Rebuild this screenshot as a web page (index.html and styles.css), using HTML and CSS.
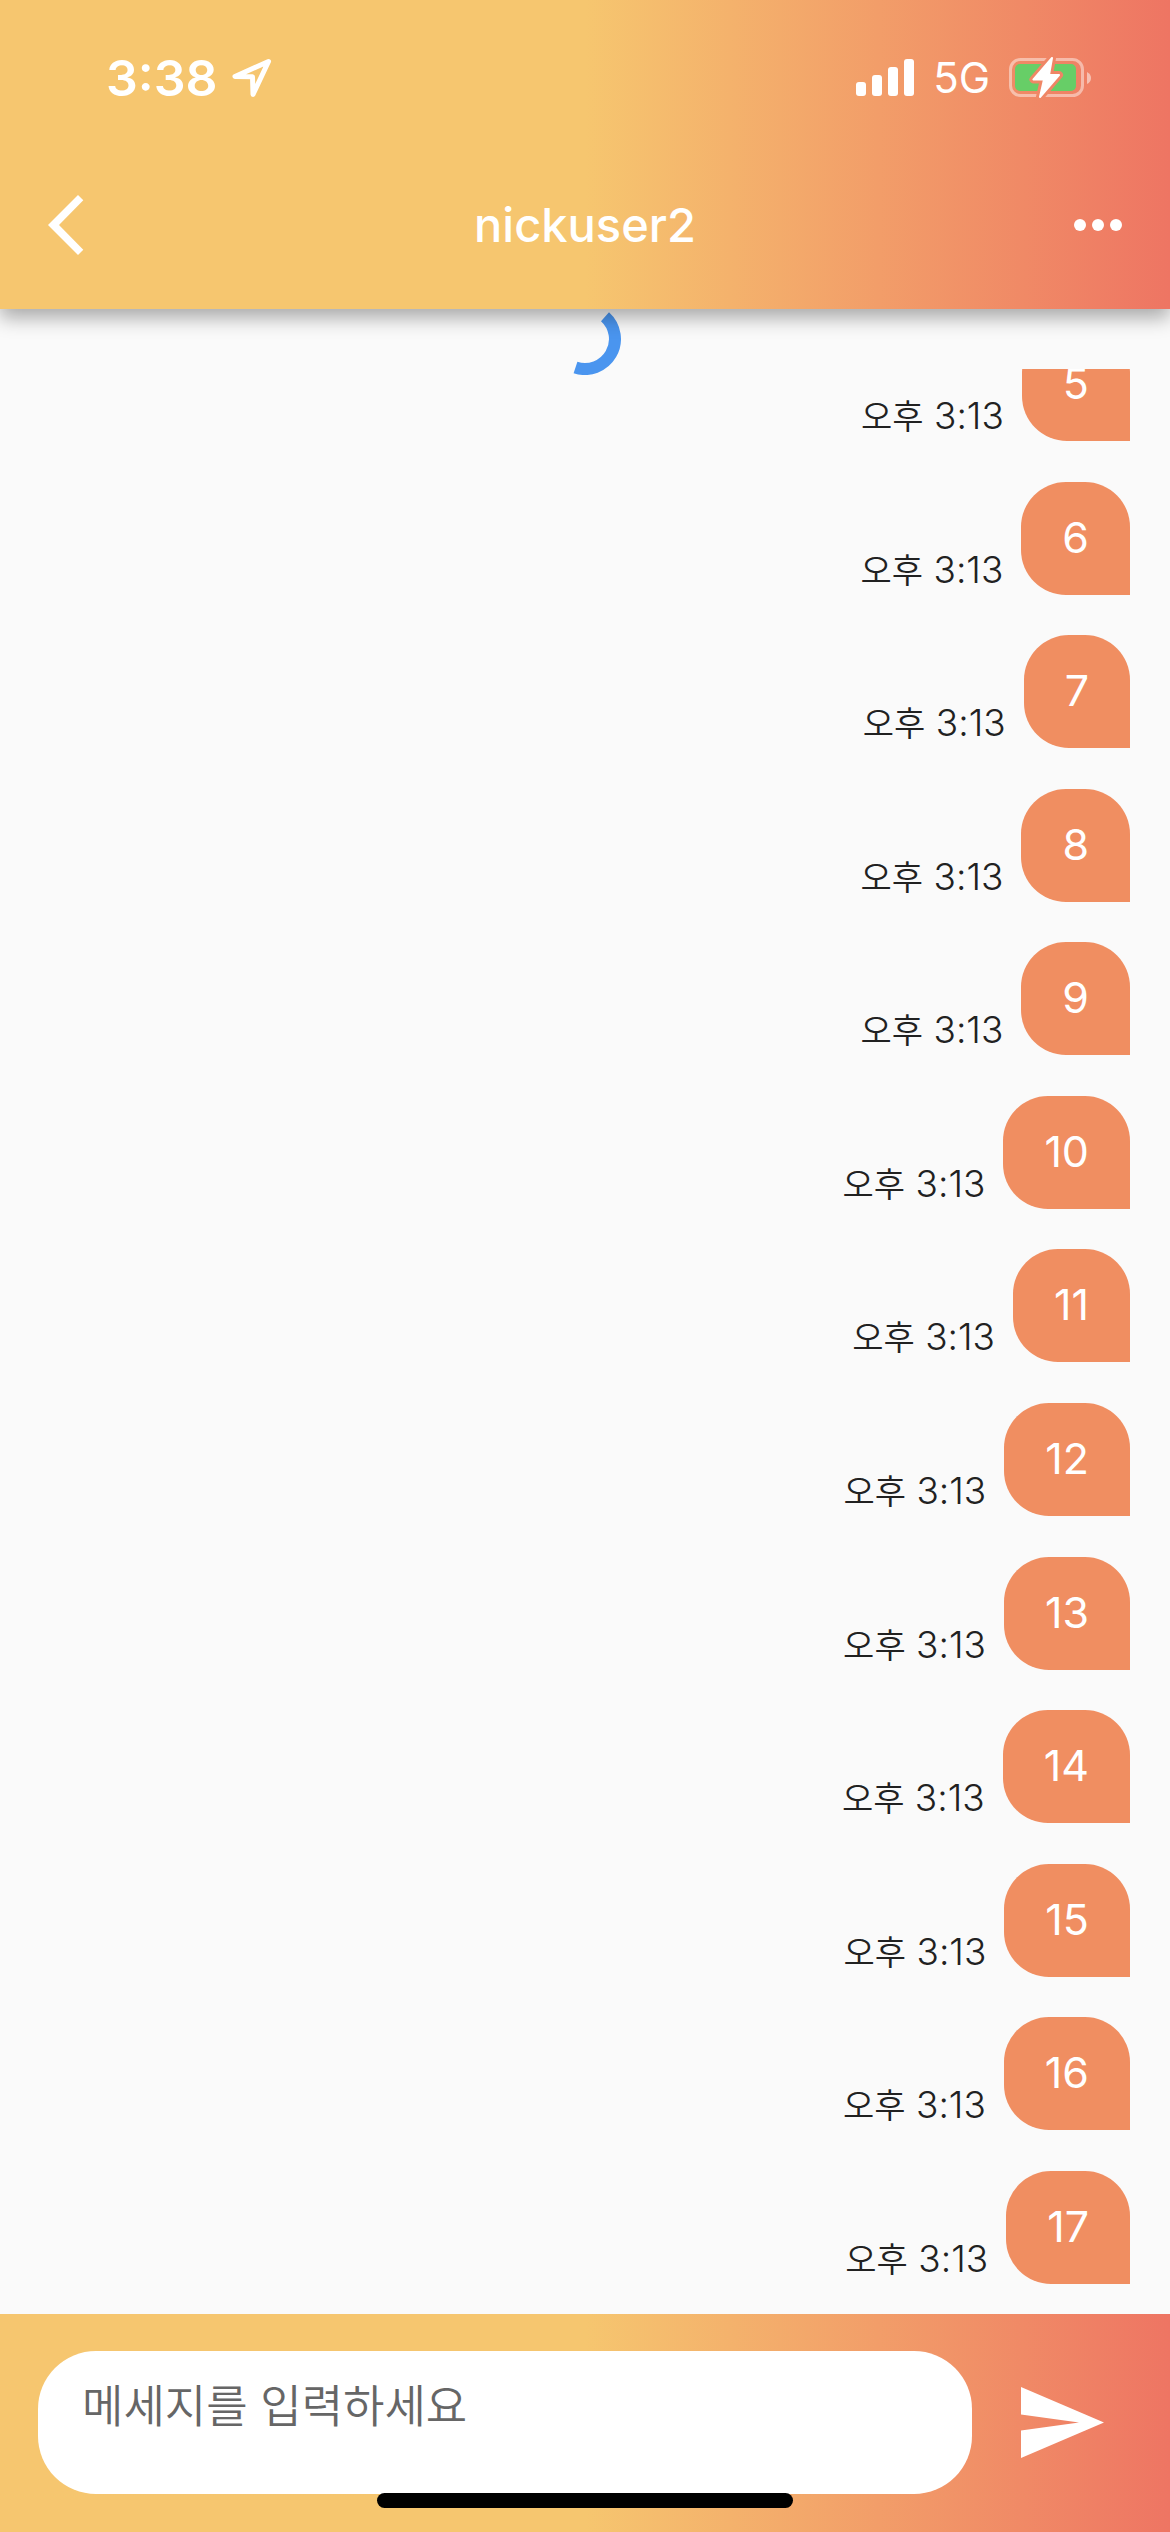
FILE: index.html
```html
<!DOCTYPE html>
<html lang="ko">
<head>
<meta charset="utf-8">
<meta name="viewport" content="width=device-width, initial-scale=1">
<title>nickuser2</title>
<link rel="stylesheet" href="styles.css">
</head>
<body>
<div class="app">
  <header class="header">
    <div class="status">
      <div class="status-group status-left">
        <span class="clock">3:38</span>
        <svg class="location" viewBox="0 0 40 40" aria-hidden="true"><path d="M36.5 3.5 3 18.5 20.5 18.8 21 36.5Z" fill="none" stroke="#fff" stroke-width="5" stroke-linejoin="round"/></svg>
      </div>
      <div class="status-group status-right">
        <svg class="signal" viewBox="0 0 58 38" fill="#fff" aria-hidden="true"><rect x="0" y="23" width="10" height="14" rx="3"/><rect x="16" y="16" width="10" height="21" rx="3"/><rect x="32" y="8" width="10" height="29" rx="3"/><rect x="48" y="0" width="10" height="37" rx="3"/></svg>
        <span class="network">5G</span>
        <svg class="battery" viewBox="0 0 83 42" aria-hidden="true">
          <defs><mask id="bolt-gap"><rect width="83" height="42" fill="#fff"/><path d="M43 1 24.500 22.500 35 22.500 31 40 50 18 40 18Z" fill="#000" stroke="#000" stroke-width="8" stroke-linejoin="round"/></mask></defs>
          <g mask="url(#bolt-gap)">
            <rect x="1.500" y="2.500" width="72" height="36" rx="10" fill="none" stroke="#fff" stroke-opacity=".45" stroke-width="3"/>
            <rect x="6" y="7" width="61" height="27" rx="5" fill="#67ce67"/>
          </g>
          <path d="M78 15q4 2 4 6t-4 6Z" fill="#fff" fill-opacity=".5"/>
          <path d="M43 1 24.500 22.500 35 22.500 31 40 50 18 40 18Z" fill="#fff" stroke="#fff" stroke-width="2" stroke-linejoin="round"/>
        </svg>
      </div>
    </div>
    <nav class="nav">
      <button class="icon-button" type="button" aria-label="뒤로"><svg class="back" viewBox="0 0 36 60" aria-hidden="true"><path d="M30 0 35.300 5.300 11 30 35.300 54.700 30 60 0 30Z" fill="#fff"/></svg></button>
      <h1 class="title">nickuser2</h1>
      <button class="icon-button icon-button-end" type="button" aria-label="더보기"><svg class="more" viewBox="0 0 48 12" fill="#fff" aria-hidden="true"><circle cx="6" cy="6" r="6"/><circle cx="24" cy="6" r="6"/><circle cx="42" cy="6" r="6"/></svg></button>
    </nav>
  </header>

  <div class="refresh" role="status" aria-label="불러오는 중">
    <svg class="spinner" viewBox="0 0 72 72" aria-hidden="true"><path d="M56 13.700A30 30 0 0 1 26.500 64.500" fill="none" stroke="#4a95ef" stroke-width="12"/></svg>
  </div>

  <main class="chat">
    <ol class="messages">
      <li class="message"><time class="time"><span class="meridiem">오후</span> 3:13</time><p class="bubble">5</p></li>
      <li class="message"><time class="time"><span class="meridiem">오후</span> 3:13</time><p class="bubble">6</p></li>
      <li class="message"><time class="time"><span class="meridiem">오후</span> 3:13</time><p class="bubble">7</p></li>
      <li class="message"><time class="time"><span class="meridiem">오후</span> 3:13</time><p class="bubble">8</p></li>
      <li class="message"><time class="time"><span class="meridiem">오후</span> 3:13</time><p class="bubble">9</p></li>
      <li class="message"><time class="time"><span class="meridiem">오후</span> 3:13</time><p class="bubble">10</p></li>
      <li class="message"><time class="time"><span class="meridiem">오후</span> 3:13</time><p class="bubble">11</p></li>
      <li class="message"><time class="time"><span class="meridiem">오후</span> 3:13</time><p class="bubble">12</p></li>
      <li class="message"><time class="time"><span class="meridiem">오후</span> 3:13</time><p class="bubble">13</p></li>
      <li class="message"><time class="time"><span class="meridiem">오후</span> 3:13</time><p class="bubble">14</p></li>
      <li class="message"><time class="time"><span class="meridiem">오후</span> 3:13</time><p class="bubble">15</p></li>
      <li class="message"><time class="time"><span class="meridiem">오후</span> 3:13</time><p class="bubble">16</p></li>
      <li class="message"><time class="time"><span class="meridiem">오후</span> 3:13</time><p class="bubble">17</p></li>
    </ol>
  </main>

  <form class="composer">
    <textarea class="field" aria-label="메세지" placeholder="메세지를 입력하세요"></textarea>
    <button class="icon-button send" type="button" aria-label="보내기"><svg class="send-icon" viewBox="0 0 83 71" aria-hidden="true"><path d="M0 0 83 35.500 0 71V43.500L58 35.500 0 27.500Z" fill="#fff"/></svg></button>
    <div class="home-indicator"></div>
  </form>
</div>
</body>
</html>
```
FILE: styles.css
```css
:root {
  --brand: linear-gradient(90deg, #f6c66f 50%, #ee7563);
  --bubble: #f08e61;
  --font: Inter, "Noto Sans CJK KR", sans-serif;
}

* {
  box-sizing: border-box;
}

body {
  margin: 0;
  font-family: var(--font);
  background: #fafafa;
  color: #212121;
}

.app {
  display: flex;
  flex-direction: column;
  height: 100vh;
}

.header {
  position: relative;
  z-index: 1;
  color: #fff;
  background: var(--brand);
  box-shadow: 0 9px 18px rgba(0, 0, 0, 0.32);
}

.status {
  display: flex;
  align-items: center;
  justify-content: space-between;
  height: 141px;
  padding: 14px 78px 0 106px;
}

.status-group {
  display: flex;
  align-items: center;
}

.status-left {
  gap: 14px;
}

.status-right {
  gap: 19px;
}

.clock {
  font-size: 50px;
  font-weight: 600;
  line-height: 60px;
}

.network {
  font-size: 42px;
  line-height: 60px;
}

.location {
  width: 40px;
  height: 40px;
}

.signal {
  width: 58px;
  height: 38px;
}

.battery {
  width: 83px;
  height: 42px;
}

.nav {
  display: grid;
  grid-template-columns: 1fr auto 1fr;
  align-items: center;
  height: 168px;
  padding: 0 48px;
}

.title {
  margin: 0;
  font-size: 47px;
  font-weight: 500;
  line-height: 60px;
}

.icon-button {
  display: flex;
  align-items: center;
  justify-self: start;
  min-height: 60px;
  padding: 0;
  border: 0;
  background: none;
  cursor: pointer;
}

.icon-button-end {
  justify-self: end;
}

.back {
  width: 36px;
  height: 60px;
}

.more {
  width: 48px;
  height: 12px;
}

.refresh {
  display: flex;
  align-items: center;
  justify-content: center;
  height: 60px;
}

.spinner {
  flex: none;
  width: 72px;
  height: 72px;
}

.chat {
  display: flex;
  flex: 1;
  flex-direction: column;
  min-height: 0;
  overflow: hidden;
}

.messages {
  display: flex;
  flex: 1;
  flex-direction: column;
  justify-content: space-between;
  margin: -41px 0 0;
  padding: 0 40px 30px;
  list-style: none;
}

.message {
  display: flex;
  align-items: flex-end;
  justify-content: flex-end;
  gap: 18px;
}

.time {
  padding-bottom: 4px;
  font-size: 37px;
  font-weight: 350;
  line-height: 40px;
}

.meridiem {
  font-size: 34px;
}

.bubble {
  margin: 0;
  padding: 29px 41px 32px;
  border-radius: 45px 45px 0 45px;
  font-size: 43px;
  line-height: 52px;
  color: #fff;
  background: var(--bubble);
}

.composer {
  position: relative;
  display: flex;
  align-items: center;
  gap: 49px;
  padding: 37px 66px 38px 38px;
  background: var(--brand);
}

.field {
  flex: 1;
  height: 143px;
  padding: 26px 44px;
  border: 0;
  border-radius: 58px;
  outline: 0;
  resize: none;
  font: 350 45px/60px var(--font);
  color: #212121;
  background: #fff;
}

.field::placeholder {
  color: #666;
  opacity: 1;
}

.send-icon {
  width: 83px;
  height: 71px;
}

.home-indicator {
  position: absolute;
  bottom: 24px;
  left: 50%;
  width: 416px;
  height: 15px;
  border-radius: 8px;
  background: #000;
  transform: translateX(-50%);
}
```
